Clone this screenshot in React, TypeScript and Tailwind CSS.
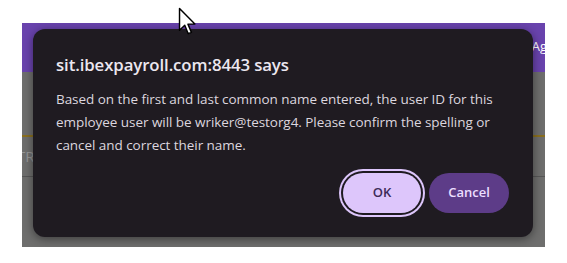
const Cursor = () => (
  <svg
    className="absolute left-[178px] top-[7px]"
    width="19"
    height="29"
    viewBox="0 0 13 20"
  >
    <path
      d="M1 1 L1 16 L4.6 12.6 L7 18.4 L9.2 17.5 L6.8 11.8 L11.6 11.8 Z"
      fill="#ffffff"
      stroke="#000000"
      strokeWidth="1"
      strokeLinejoin="round"
    />
  </svg>
);

const App = () => {
  return (
    <main className="relative w-[567px] h-[263px] bg-white overflow-hidden font-['Open_Sans','Noto_Sans',sans-serif]">
      <div className="relative ml-[22px] mt-[23px] w-[523px] h-[224px] bg-[#6e6e6d] overflow-hidden">
        <div className="flex justify-end items-start h-[49px] bg-[#6943ad]">
          <span className="mt-[17px] mr-[-2px] text-[13px] leading-none text-white">Ag</span>
        </div>
        <div className="mt-[63px] h-[2px] bg-[#8a6f1f]" />
        <div className="flex items-center h-[39px]">
          <span className="ml-[-5px] text-[15px] text-[#959595]">TR</span>
        </div>
        <div className="h-px bg-[#565656]" />

        <div className="absolute left-[11px] top-[6px] w-[500px] h-[208px] rounded-[12px] bg-[#1f1b21] shadow-[0_2px_10px_rgba(0,0,0,0.45)] px-[23px] pt-[24px] pb-[24px] flex flex-col">
          <h2 className="text-[16.8px] font-semibold leading-[24px] tracking-[-0.1px] text-[#ece7ef]">
            sit.ibexpayroll.com:8443 says
          </h2>
          <p className="mt-[11px] text-[13.5px] leading-[23px] tracking-[-0.05px] text-[#dcd6df]">
            Based on the first and last common name entered, the user ID for this
            employee user will be wriker@testorg4. Please confirm the spelling or
            cancel and correct their name.
          </p>
          <div className="mt-auto flex justify-end gap-[8px] mr-px">
            <button className="w-[78px] h-[40px] rounded-full bg-[#ddc6fb] text-[13px] font-semibold text-[#3c2b58] ring-2 ring-[#ddc6fb] ring-offset-2 ring-offset-[#1f1b21]">
              OK
            </button>
            <button className="w-[80px] h-[40px] rounded-full bg-[#5d3c88] text-[13px] font-semibold text-[#ecdfff]">
              Cancel
            </button>
          </div>
        </div>
      </div>
      <Cursor />
    </main>
  );
};

export default App;
